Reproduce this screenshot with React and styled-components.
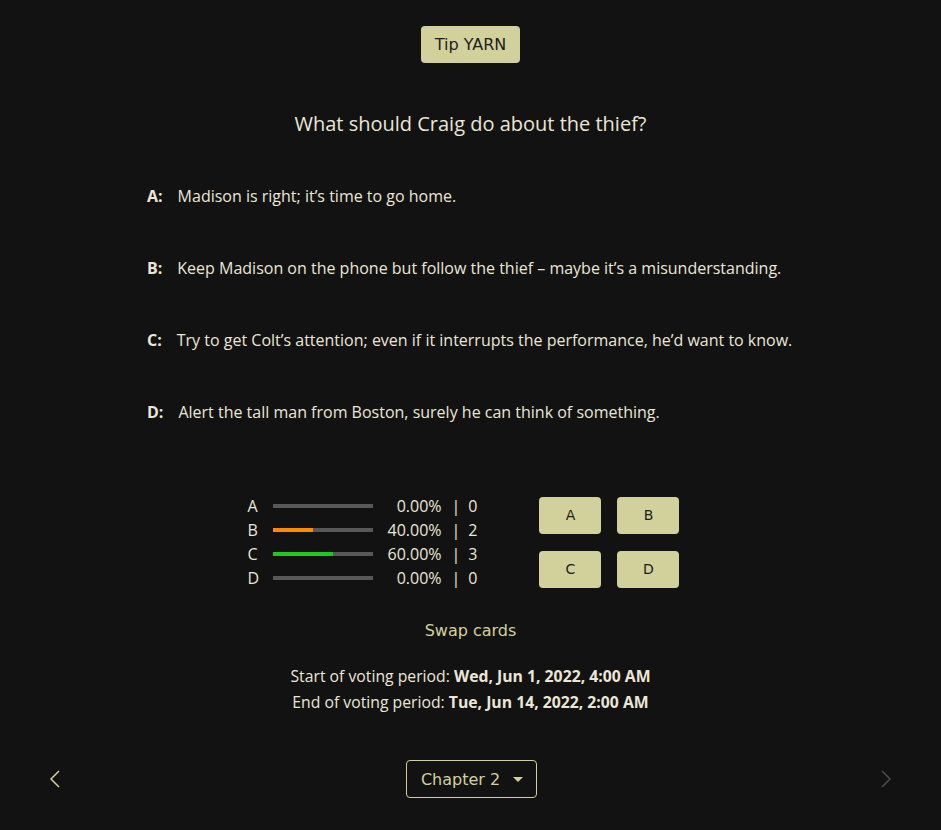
import React from 'react'
import styled, { createGlobalStyle } from 'styled-components'

const GlobalStyle = createGlobalStyle`
body {
  margin: 0;
  background: #121212;
  color: #ebe6d6;
  font-family: "Open Sans", "Noto Sans", sans-serif;
}
`

const ACCENT = '#d3d19b'

const Page = styled.div`
width: 941px;
min-height: 830px;
display: flex;
flex-direction: column;
align-items: center;
padding-top: 26px;
box-sizing: border-box;
`

const TipButton = styled.button`
height: 37px;
padding: 0 14px;
border: none;
border-radius: 4px;
background: ${ACCENT};
color: #1d1d1d;
font-family: "DejaVu Sans", sans-serif;
font-size: 16px;
cursor: pointer;
`

const Title = styled.h2`
margin: 48px 0 0;
font-size: 20px;
font-weight: 400;
line-height: 26px;
`

const Options = styled.ol`
list-style: none;
margin: 48px 0 0;
padding: 0;
width: 647px;
display: flex;
flex-direction: column;
gap: 50px;
`

const Option = styled.li`
display: flex;
font-size: 16px;
line-height: 22px;

& b {
  font-weight: 700;
  margin-right: 15px;
}
`

const Voting = styled.div`
margin-top: 72px;
display: flex;
align-items: center;
gap: 62px;
margin-left: -14px;
`

const Stats = styled.div`
display: grid;
grid-template-columns: 25px 100px 69px auto auto;
row-gap: 2px;
align-items: center;
font-size: 16px;
line-height: 22px;
`

const Letter = styled.span``

const Track = styled.div`
height: 4px;
background: #585858;
`

const Fill = styled.div`
height: 100%;
background: ${p => p.$color};
`

const Percent = styled.span`
text-align: right;
`

const Sep = styled.span`
margin: 0 8px 0 10px;
`

const ButtonGrid = styled.div`
display: grid;
grid-template-columns: 62px 62px;
column-gap: 16px;
row-gap: 17px;
`

const VoteButton = styled.button`
height: 37px;
border: none;
border-radius: 4px;
background: ${ACCENT};
color: #1d1d1d;
font-family: "DejaVu Sans", sans-serif;
font-size: 14px;
cursor: pointer;
`

const SwapLink = styled.a`
margin-top: 31px;
color: ${ACCENT};
font-family: "DejaVu Sans", sans-serif;
font-size: 16px;
line-height: 22px;
cursor: pointer;
`

const Period = styled.div`
margin-top: 21px;
display: flex;
flex-direction: column;
align-items: center;
font-size: 15.75px;
line-height: 26px;

& b {
  font-weight: 700;
}
`

const Footer = styled.div`
margin-top: 45px;
width: 100%;
padding: 0 45px;
box-sizing: border-box;
display: flex;
align-items: center;
justify-content: space-between;
`

const Arrow = styled.button`
width: 20px;
height: 20px;
padding: 0;
border: none;
background: none;
color: ${p => (p.disabled ? '#4d4d4d' : ACCENT)};
display: flex;
align-items: center;
justify-content: center;
`

const ChapterSelect = styled.button`
height: 38px;
width: 131px;
border: 1px solid ${ACCENT};
border-radius: 4px;
background: transparent;
color: ${ACCENT};
font-family: "DejaVu Sans", sans-serif;
font-size: 16px;
display: flex;
align-items: center;
justify-content: center;
gap: 13px;
padding: 0 0 0 2px;
margin-left: 1px;
`

const Caret = styled.span`
width: 0;
height: 0;
border-left: 5px solid transparent;
border-right: 5px solid transparent;
border-top: 5px solid ${ACCENT};
`

const options = [
  ['A', 'Madison is right; it’s time to go home.'],
  ['B', 'Keep Madison on the phone but follow the thief – maybe it’s a misunderstanding.'],
  ['C', 'Try to get Colt’s attention; even if it interrupts the performance, he’d want to know.'],
  ['D', 'Alert the tall man from Boston, surely he can think of something.'],
]

const results = [
  { letter: 'A', pct: 0, count: 0, color: '#585858' },
  { letter: 'B', pct: 40, count: 2, color: '#ff8a00' },
  { letter: 'C', pct: 60, count: 3, color: '#1ec81e' },
  { letter: 'D', pct: 0, count: 0, color: '#585858' },
]

const Chevron = ({ dir }) => (
  <svg width="12" height="20" viewBox="0 0 12 20" fill="none" stroke="currentColor" strokeWidth="1.5">
    {dir === 'left' ? <path d="M10 2 L2 10 L10 18" /> : <path d="M2 2 L10 10 L2 18" />}
  </svg>
)

export default function App() {
  return (
    <>
      <GlobalStyle />
      <Page>
        <TipButton>Tip YARN</TipButton>
        <Title>What should Craig do about the thief?</Title>

        <Options>
          {options.map(([l, text]) => (
            <Option key={l}><b>{l}:</b>{text}</Option>
          ))}
        </Options>

        <Voting>
          <Stats>
            {results.map(r => (
              <React.Fragment key={r.letter}>
                <Letter>{r.letter}</Letter>
                <Track><Fill $color={r.color} style={{ width: `${r.pct}%` }} /></Track>
                <Percent>{r.pct.toFixed(2)}%</Percent>
                <Sep>|</Sep>
                <span>{r.count}</span>
              </React.Fragment>
            ))}
          </Stats>
          <ButtonGrid>
            {['A', 'B', 'C', 'D'].map(l => <VoteButton key={l}>{l}</VoteButton>)}
          </ButtonGrid>
        </Voting>

        <SwapLink>Swap cards</SwapLink>

        <Period>
          <span>Start of voting period: <b>Wed, Jun 1, 2022, 4:00 AM</b></span>
          <span>End of voting period: <b>Tue, Jun 14, 2022, 2:00 AM</b></span>
        </Period>

        <Footer>
          <Arrow><Chevron dir="left" /></Arrow>
          <ChapterSelect>Chapter 2 <Caret /></ChapterSelect>
          <Arrow disabled><Chevron dir="right" /></Arrow>
        </Footer>
      </Page>
    </>
  )
}
